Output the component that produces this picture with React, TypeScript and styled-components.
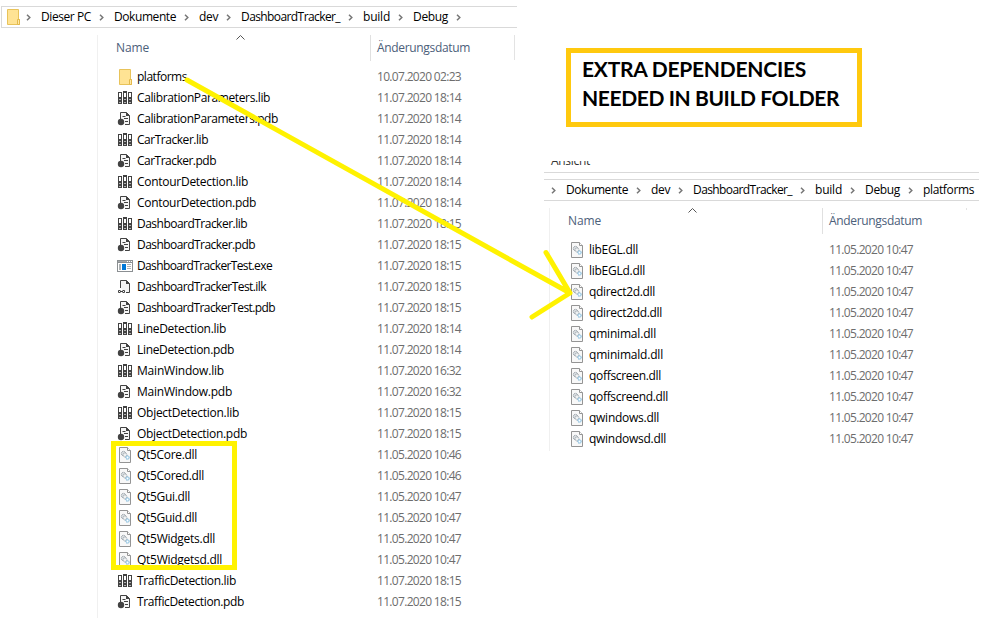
import React, { useLayoutEffect, useRef, useState } from 'react';
import styled, { createGlobalStyle } from 'styled-components';

const GlobalStyle = createGlobalStyle`
  html, body { margin: 0; background: #fff; overflow: hidden; }
  * { box-sizing: border-box; }
`;

const Canvas = styled.main`
  position: relative;
  display: grid;
  grid-template-columns: 544px 1fr;
  width: 988px;
  height: 619px;
  overflow: hidden;
  background: #fff;
  font-family: 'Open Sans', 'Noto Sans', sans-serif;
  font-size: 12px;
  color: #000;
`;

const RightSide = styled.div`
  display: flex;
  flex-direction: column;
`;

const Window = styled.section<{ $width: number }>`
  width: ${p => p.$width}px;
`;

const AddressBar = styled.nav<{ $open?: boolean }>`
  display: flex;
  align-items: center;
  height: 22px;
  border: solid #d9d9d9;
  border-width: ${p => (p.$open ? '1px 0' : '1px 0 1px 1px')};
  padding: 0 0 1px ${p => (p.$open ? 0 : 3)}px;
  white-space: nowrap;

  > svg:first-child {
    margin-left: ${p => (p.$open ? 7 : 0)}px;
    margin-right: ${p => (p.$open ? 10 : -3)}px;
  }
`;

const LeftBar = styled.div`
  padding: 6px 0 0 1px;
`;

const Chevron = styled.svg`
  flex: none;
  width: 5px;
  height: 7px;
  margin: 2px 10px 0 8px;
`;

const Body = styled.div<{ $indent: number; $height: number }>`
  margin: 7px 0 0 ${p => p.$indent}px;
  height: ${p => p.$height}px;
  border-left: 1px solid #f0f0f0;
`;

const ColumnHeader = styled.header`
  display: grid;
  grid-template-columns: 272px 144px 1px;
  height: 26px;
  color: #4c607a;
`;

const HeaderCell = styled.div<{ $first?: boolean }>`
  position: relative;
  display: flex;
  align-items: center;
  padding: 0 0 2px ${p => (p.$first ? 18 : 6)}px;
  border-left: ${p => (p.$first ? 0 : 1)}px solid #e0e0e0;
`;

const EndMark = styled.div<{ $short?: boolean }>`
  height: ${p => (p.$short ? '2px' : '25px')};
  background: #e3e3e3;
`;

const SortMark = styled.svg`
  position: absolute;
  left: 138px;
  top: 0;
  width: 9px;
  height: 5px;
`;

const Files = styled.ul`
  list-style: none;
  margin: 0;
  padding: 5px 0 0;
`;

const FileRow = styled.li`
  display: grid;
  grid-template-columns: 20px 240px 1fr;
  align-items: center;
  height: 21px;
  padding-left: 19px;
`;

const Icon = styled.svg`
  display: block;
  flex: none;
  width: 16px;
  height: 16px;
`;

const DateText = styled.div`
  color: #6d6d6d;
`;

const MenuStrip = styled.div`
  height: 12px;
  margin-top: 161px;
  overflow: hidden;
  border-bottom: 1px solid #d9d9d9;
  width: 435px;
  color: #333;
`;

const MenuLabel = styled.div`
  margin: -9px 0 0 7px;
  line-height: 17px;
`;

const RightBar = styled.div`
  padding-top: 6px;
`;

const Callout = styled.aside`
  position: absolute;
  left: 566px;
  top: 48px;
  width: 296px;
  height: 79px;
  border: 5px solid #ffc90e;
  padding: 1px 0 0 11px;
  font: 700 21px/29px Lato, sans-serif;
`;

const Highlight = styled.div`
  position: absolute;
  left: 111px;
  top: 441px;
  width: 126px;
  height: 129px;
  border: 5px solid #fff200;
`;

const ArrowLayer = styled.svg`
  position: absolute;
  inset: 0;
  width: 988px;
  height: 619px;
  pointer-events: none;
`;

const TextRun = styled.span`
  display: inline-block;
  justify-self: start;
  white-space: pre;
`;

/* Tracks a label so that it takes up the given width. */
function Fit({ text, width }: { text: string; width: number }) {
  const ref = useRef<HTMLSpanElement>(null);
  const [spacing, setSpacing] = useState(0);
  useLayoutEffect(() => {
    if (ref.current) {
      const natural = ref.current.getBoundingClientRect().width;
      setSpacing((width - natural) / text.length);
    }
  }, [text, width]);
  return <TextRun ref={ref} style={{ letterSpacing: spacing }}>{text}</TextRun>;
}

type Kind = 'folder' | 'lib' | 'pdb' | 'exe' | 'ilk' | 'dll';

function FileIcon({ kind }: { kind: Kind }) {
  switch (kind) {
    case 'folder':
      return (
        <Icon viewBox="0 0 16 16">
          <path d="M2.500.5h11v10h1v5h-12z" fill="#ffe394" stroke="#e8c35a" />
          <path d="M12.500 10.500h2v5h-2z" fill="#ffe9a8" stroke="#e3b94c" />
        </Icon>
      );
    case 'lib':
      return (
        <Icon viewBox="0 0 16 16" shapeRendering="crispEdges">
          <path d="M1 2h4v12H1zM6 1h4v13H6zM11 2h4v12h-4z" fill="#424242" />
          <path d="M2 3h2v4H2zM7 3h2v4H7zM12 3h2v4h-2z" fill="#fff" />
          <path d="M2 9h2v1H2zM2 12h2v1H2zM7 9h2v1H7zM7 12h2v1H7zM12 9h2v1h-2zM12 12h2v1h-2z" fill="#b4b4b4" />
        </Icon>
      );
    case 'pdb':
      return (
        <Icon viewBox="0 0 16 16">
          <path d="M3.500 8V1.500h6l3 3v9H8" fill="#f6f6f6" stroke="#424242" />
          <path d="M9 1v4h4z" fill="#424242" />
          <path d="M5.500 5.500h3M7 7.500h4M8 10.500h3" stroke="#424242" fill="none" />
          <circle cx="4" cy="11" r="3.200" fill="#424242" />
        </Icon>
      );
    case 'ilk':
      return (
        <Icon viewBox="0 0 16 16">
          <path d="M3.500 9V1.500h6l3 3v9H9" fill="#f3f3f3" stroke="#424242" />
          <path d="M9 1v4h4z" fill="#424242" />
          <path d="M3.500 11.500h-2v2h2M5.500 11.500h2v2h-2M3 12.500h3" fill="none" stroke="#424242" />
        </Icon>
      );
    case 'exe':
      return (
        <Icon viewBox="0 0 16 16" shapeRendering="crispEdges">
          <path d="M0 2h16v12H0z" fill="#8b8f92" />
          <path d="M1 5h14v8H1z" fill="#fff" />
          <path d="M1 3h14v1H1z" fill="#a3a7a9" />
          <path d="M10 3h1v1h-1zM12 3h1v1h-1zM14 3h1v1h-1z" fill="#fff" />
          <path d="M2 6h2v6H2zM10 6h4v1h-4zM10 8h4v1h-4zM10 10h4v1h-4z" fill="#aeb2b4" />
          <path d="M5 6h4v6H5z" fill="#0078d7" />
        </Icon>
      );
    default:
      return (
        <Icon viewBox="0 0 16 16">
          <path d="M2.500.5h8l3 3v12h-11z" fill="#f8f8f8" stroke="#949494" />
          <path d="M10.500.5v3h3" fill="#fff" stroke="#949494" />
          <circle cx="6.500" cy="6.500" r="2.200" fill="#d9dde0" stroke="#8f989f" strokeDasharray="1 .6" />
          <circle cx="8" cy="8" r="2" fill="#eef1f3" stroke="#8f989f" strokeDasharray="1 .6" />
          <circle cx="10.500" cy="10.500" r="1.800" fill="#c5e3f4" stroke="#7eb7d8" strokeDasharray="1 .5" />
          <circle cx="10.500" cy="10.500" r=".7" fill="#fff" />
        </Icon>
      );
  }
}

type FileEntry = [name: string, width: number, date: string];

const buildFiles: FileEntry[] = [
  ['platforms', 50, '10.07.2020 02:23'],
  ['CalibrationParameters.lib', 133, '11.07.2020 18:14'],
  ['CalibrationParameters.pdb', 141, '11.07.2020 18:14'],
  ['CarTracker.lib', 71, '11.07.2020 18:14'],
  ['CarTracker.pdb', 79, '11.07.2020 18:14'],
  ['ContourDetection.lib', 111, '11.07.2020 18:14'],
  ['ContourDetection.pdb', 119, '11.07.2020 18:14'],
  ['DashboardTracker.lib', 110, '11.07.2020 18:15'],
  ['DashboardTracker.pdb', 118, '11.07.2020 18:15'],
  ['DashboardTrackerTest.exe', 135, '11.07.2020 18:15'],
  ['DashboardTrackerTest.ilk', 129, '11.07.2020 18:15'],
  ['DashboardTrackerTest.pdb', 138, '11.07.2020 18:15'],
  ['LineDetection.lib', 89, '11.07.2020 18:14'],
  ['LineDetection.pdb', 97, '11.07.2020 18:14'],
  ['MainWindow.lib', 87, '11.07.2020 16:32'],
  ['MainWindow.pdb', 95, '11.07.2020 16:32'],
  ['ObjectDetection.lib', 102, '11.07.2020 18:15'],
  ['ObjectDetection.pdb', 110, '11.07.2020 18:15'],
  ['Qt5Core.dll', 60, '11.05.2020 10:46'],
  ['Qt5Cored.dll', 67, '11.05.2020 10:46'],
  ['Qt5Gui.dll', 53, '11.05.2020 10:47'],
  ['Qt5Guid.dll', 60, '11.05.2020 10:47'],
  ['Qt5Widgets.dll', 78, '11.05.2020 10:47'],
  ['Qt5Widgetsd.dll', 85, '11.05.2020 10:47'],
  ['TrafficDetection.lib', 99, '11.07.2020 18:15'],
  ['TrafficDetection.pdb', 107, '11.07.2020 18:15'],
];

const platformFiles: FileEntry[] = ([
  ['libEGL.dll', 49],
  ['libEGLd.dll', 56],
  ['qdirect2d.dll', 66],
  ['qdirect2dd.dll', 73],
  ['qminimal.dll', 67],
  ['qminimald.dll', 74],
  ['qoffscreen.dll', 72],
  ['qoffscreend.dll', 79],
  ['qwindows.dll', 70],
  ['qwindowsd.dll', 77],
] as [string, number][]).map(([name, width]) => [name, width, '11.05.2020 10:47']);

const kindOf = (name: string): Kind =>
  name.includes('.') ? (name.split('.').pop() as Kind) : 'folder';

const Separator = () => (
  <Chevron viewBox="0 0 5 7">
    <path d="M1 .8 3.800 3.500 1 6.200" fill="none" stroke="#777" strokeWidth="1.500" />
  </Chevron>
);

function Crumbs({ items }: { items: [string, number][] }) {
  return (
    <>
      {items.map(([text, width]) => (
        <React.Fragment key={text}>
          <Separator />
          <Fit text={text} width={width} />
        </React.Fragment>
      ))}
    </>
  );
}

function FileList({ files, indent, height, short }: { files: FileEntry[]; indent: number; height: number; short?: boolean }) {
  return (
    <Body $indent={indent} $height={height}>
      <ColumnHeader>
        <HeaderCell $first>
          <Fit text="Name" width={33} />
          <SortMark viewBox="0 0 9 5">
            <path d="M.5 4.500l4-4 4 4" fill="none" stroke="#555" />
          </SortMark>
        </HeaderCell>
        <HeaderCell><Fit text="Änderungsdatum" width={93} /></HeaderCell>
        <EndMark $short={short} />
      </ColumnHeader>
      <Files>
        {files.map(([name, width, date]) => (
          <FileRow key={name}>
            <FileIcon kind={kindOf(name)} />
            <Fit text={name} width={width} />
            <DateText><Fit text={date} width={84} /></DateText>
          </FileRow>
        ))}
      </Files>
    </Body>
  );
}

export default function App() {
  return (
    <Canvas>
      <GlobalStyle />
      <Window $width={517}>
        <LeftBar>
          <AddressBar>
            <FileIcon kind="folder" />
            <Crumbs items={[['Dieser PC', 50], ['Dokumente', 62], ['dev', 19], ['DashboardTracker_', 99], ['build', 27], ['Debug', 35]]} />
            <Separator />
          </AddressBar>
        </LeftBar>
        <FileList files={buildFiles} indent={97} height={583} />
      </Window>
      <RightSide>
        <MenuStrip>
          <MenuLabel><Fit text="Ansicht" width={39} /></MenuLabel>
        </MenuStrip>
        <Window $width={435}>
          <RightBar>
            <AddressBar $open>
              <Crumbs items={[['Dokumente', 62], ['dev', 19], ['DashboardTracker_', 99], ['build', 27], ['Debug', 35], ['platforms', 51]]} />
            </AddressBar>
          </RightBar>
          <FileList files={platformFiles} indent={5} height={243} short />
        </Window>
      </RightSide>
      <Callout>
        <div><Fit text="EXTRA DEPENDENCIES" width={224} /></div>
        <div><Fit text="NEEDED IN BUILD FOLDER" width={257} /></div>
      </Callout>
      <Highlight />
      <ArrowLayer viewBox="0 0 988 619">
        <path d="M187 80 570 293M546 252.500 570 293 532 317" fill="none" stroke="#fff200" strokeWidth="5" strokeLinecap="round" strokeLinejoin="round" />
      </ArrowLayer>
    </Canvas>
  );
}
